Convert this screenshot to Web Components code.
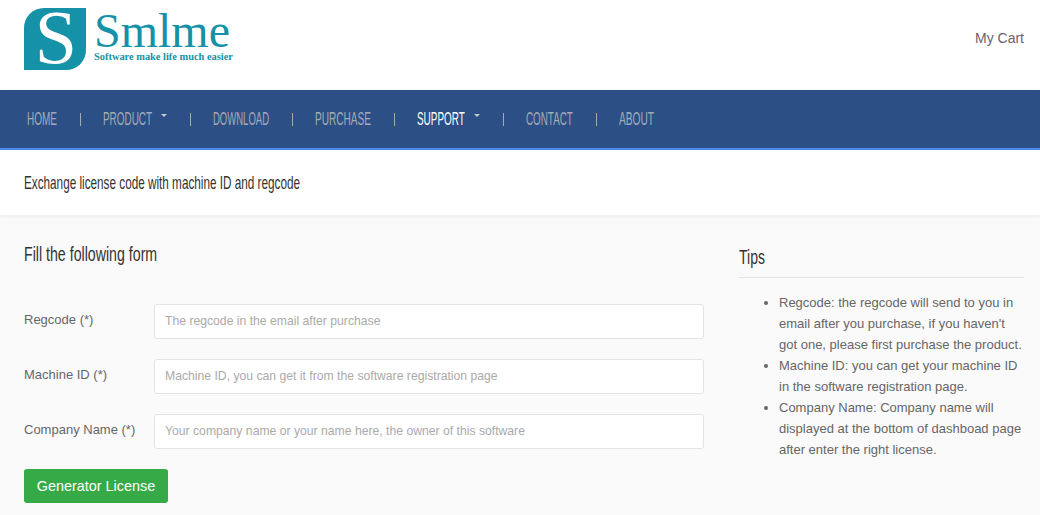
<!DOCTYPE html>
<html>
<head>
<meta charset="utf-8">
<title>Smlme</title>
<style>
  html, body { margin: 0; padding: 0; background: #fafafa; overflow: hidden; }
  body { font-family: "Liberation Sans", Arial, sans-serif; }
</style>
</head>
<body>
<site-header></site-header>
<main-nav></main-nav>
<page-title>Exchange license code with machine ID and regcode</page-title>
<page-body>
  <license-form></license-form>
  <tips-panel></tips-panel>
</page-body>

<script>
// No condensed font is installed, so squeeze the text to the width it has in the design
class CondText extends HTMLElement {
  connectedCallback() {
    const w = +this.getAttribute('w');
    this.attachShadow({ mode: 'open' });
    this.shadowRoot.innerHTML = `
      <style>
        :host { display: block; width: ${w}px; white-space: nowrap; }
        span { display: inline-block; transform-origin: left center; }
      </style>
      <span><slot></slot></span>
    `;
    const inner = this.shadowRoot.querySelector('span');
    inner.style.transform = `scaleX(${w / inner.offsetWidth})`;
  }
}
customElements.define('cond-text', CondText);

class SiteHeader extends HTMLElement {
  connectedCallback() {
    this.attachShadow({ mode: 'open' });
    this.shadowRoot.innerHTML = `
      <style>
        :host { display: flex; justify-content: space-between; align-items: flex-start; height: 90px; background: #fff; padding: 8px 16px 0 24px; box-sizing: border-box; }
        .logo { display: flex; gap: 8px; }
        .mark { width: 62px; height: 62px; background: #1592a8; border-radius: 20px 0 20px 0; color: #fff; font: 76px/58px "Liberation Serif", serif; display: flex; justify-content: center; padding-left: 2px; box-sizing: border-box; }
        .words { color: #1592a8; font-family: "Liberation Serif", serif; }
        .name { font-size: 48px; line-height: 40px; margin-top: 3px; }
        .tag { font-size: 10.4px; line-height: 12px; font-weight: bold; margin-top: 0; }
        .cart { color: #6b5f6b; font-size: 14px; margin-top: 22px; }
      </style>
      <div class="logo">
        <div class="mark">S</div>
        <div class="words"><div class="name">Smlme</div><div class="tag">Software make life much easier</div></div>
      </div>
      <div class="cart">My Cart</div>
    `;
  }
}

class MainNav extends HTMLElement {
  connectedCallback() {
    const items = [['HOME', 30], ['PRODUCT', 49, 0, 1], ['DOWNLOAD', 56], ['PURCHASE', 56], ['SUPPORT', 48, 1, 1], ['CONTACT', 47], ['ABOUT', 35]];
    this.attachShadow({ mode: 'open' });
    this.shadowRoot.innerHTML = `
      <style>
        :host { display: flex; align-items: center; height: 60px; box-sizing: border-box; background: #2c4f85; border-bottom: 2px solid #4d8cf0; padding: 0 0 0 27px; font: 18px "Liberation Sans", sans-serif; color: #a5abb5; box-shadow: 0 1px 3px rgba(0,0,0,.12); position: relative; }
        .item { display: flex; align-items: center; }
        .on { color: #fff; }
        .caret { width: 0; height: 0; border: 3px solid transparent; border-top-color: #c4c8cf; border-bottom: 0; margin: -8px 0 0 9px; }
        .sep { width: 1px; height: 13px; background: #a5abb5; margin: 0 22px 0 23px; }
      </style>
      ${items.map((it, i) => `
        <span class="item ${it[2] ? 'on' : ''}"><cond-text w="${it[1]}">${it[0]}</cond-text>${it[3] ? '<span class="caret"></span>' : ''}</span>
        ${i < items.length - 1 ? '<span class="sep"></span>' : ''}`).join('')}
    `;
  }
}

class PageTitle extends HTMLElement {
  connectedCallback() {
    this.attachShadow({ mode: 'open' });
    this.shadowRoot.innerHTML = `
      <style>
        :host { display: flex; align-items: center; height: 65px; padding-left: 24px; background: #fff; font: 18.5px "Liberation Sans", sans-serif; color: #333; box-shadow: 0 1px 4px rgba(0,0,0,.08); position: relative; }
      </style>
      <cond-text w="276"><slot></slot></cond-text>
    `;
  }
}

class PageBody extends HTMLElement {
  connectedCallback() {
    this.attachShadow({ mode: 'open' });
    this.shadowRoot.innerHTML = `
      <style>
        :host { display: flex; justify-content: space-between; padding: 0 16px 0 24px; background: #fafafa; }
      </style>
      <slot></slot>
    `;
  }
}

class FormRow extends HTMLElement {
  connectedCallback() {
    this.attachShadow({ mode: 'open' });
    this.shadowRoot.innerHTML = `
      <style>
        :host { display: flex; align-items: center; height: 35px; margin-bottom: 20px; font-size: 13px; color: #666; }
        label { width: 130px; margin-top: -4px; }
        .input { width: 550px; height: 35px; box-sizing: border-box; background: #fff; border: 1px solid #e4e4e4; border-radius: 3px; padding: 0 10px; line-height: 33px; color: #aaa; font-size: 12.2px; }
      </style>
      <label>${this.getAttribute('label')}</label>
      <div class="input">${this.getAttribute('hint')}</div>
    `;
  }
}

class LicenseForm extends HTMLElement {
  connectedCallback() {
    this.attachShadow({ mode: 'open' });
    this.shadowRoot.innerHTML = `
      <style>
        :host { display: block; width: 680px; }
        h2 { font: normal 21px/24px "Liberation Sans", sans-serif; color: #333; margin: 27px 0 38px; }
        button { display: block; width: 144px; height: 34px; padding: 0; border: 0; border-radius: 3px; background: #36aa47; color: #fff; font: 14.4px "Liberation Sans", sans-serif; }
      </style>
      <h2><cond-text w="133">Fill the following form</cond-text></h2>
      <form-row label="Regcode (*)" hint="The regcode in the email after purchase"></form-row>
      <form-row label="Machine ID (*)" hint="Machine ID, you can get it from the software registration page"></form-row>
      <form-row label="Company Name (*)" hint="Your company name or your name here, the owner of this software"></form-row>
      <button>Generator License</button>
    `;
  }
}

class TipsPanel extends HTMLElement {
  connectedCallback() {
    this.attachShadow({ mode: 'open' });
    this.shadowRoot.innerHTML = `
      <style>
        :host { display: block; width: 285px; }
        h3 { font: normal 21px/24px "Liberation Sans", sans-serif; color: #333; margin: 30px 0 0; padding-bottom: 8px; border-bottom: 1px solid #e4e4e4; }
        ul { margin: 14px 0 0; padding: 0 0 0 40px; font-size: 13px; line-height: 21px; color: #666; }
      </style>
      <h3><cond-text w="26">Tips</cond-text></h3>
      <ul>
        <li>Regcode: the regcode will send to you in email after you purchase, if you haven't got one, please first purchase the product.</li>
        <li>Machine ID: you can get your machine ID in the software registration page.</li>
        <li>Company Name: Company name will displayed at the bottom of dashboad page after enter the right license.</li>
      </ul>
    `;
  }
}

customElements.define('site-header', SiteHeader);
customElements.define('main-nav', MainNav);
customElements.define('page-title', PageTitle);
customElements.define('page-body', PageBody);
customElements.define('form-row', FormRow);
customElements.define('license-form', LicenseForm);
customElements.define('tips-panel', TipsPanel);
</script>
</body>
</html>
